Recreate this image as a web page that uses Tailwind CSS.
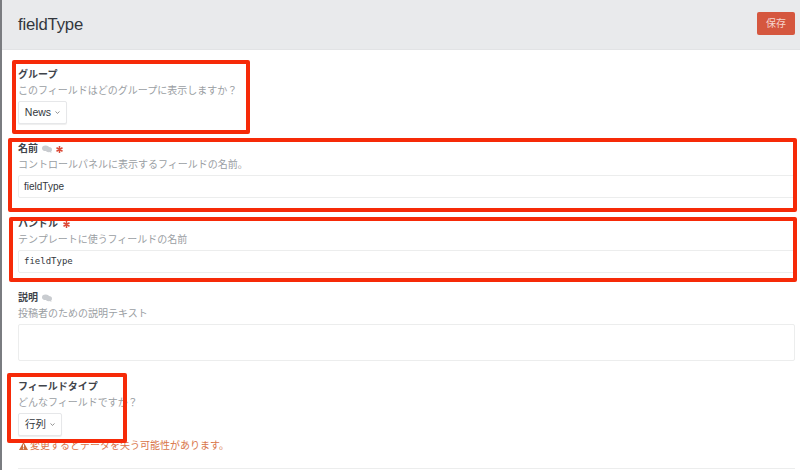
<!DOCTYPE html>
<html lang="ja">
<head>
  <meta charset="UTF-8" />
  <title>fieldType</title>
  <script src="https://cdn.jsdelivr.net/npm/@tailwindcss/browser@4"></script>
</head>
<body class="relative w-[800px] h-[470px] overflow-hidden bg-white font-['Liberation_Sans','Noto_Sans_CJK_JP',sans-serif] border-l-2 border-[#7a7c80]">

  <header class="h-[50px] pl-4 pr-[5px] flex items-center justify-between bg-[#e9eaec] border-b border-[#e2e3e5]">
    <h1 class="text-[16.7px] text-[#33373d] tracking-[-0.2px]">fieldType</h1>
    <button class="mb-[2px] w-[38px] h-[23px] rounded-[2px] bg-[#d5573f] text-[#f6d5cf] text-[10px]">保存</button>
  </header>

  <main class="pl-4 pr-[5px] pt-[17px]">
    <section class="mb-[17px]">
      <div class="h-4 flex items-center text-[10px] leading-4 font-bold text-[#3f444b]">グループ</div>
      <p class="h-[15px] text-[10px] leading-[15px] text-[#9a9ea3]">このフィールドはどのグループに表示しますか？</p>
      <button class="mt-[3px] h-[23px] w-[49px] flex items-center justify-center gap-1 rounded-[2px] bg-white border border-[#e6e7e9] shadow-[0_1px_1px_#eee] text-[10.5px] text-[#33373d]">News
        <svg class="w-[5px] h-[3px]" viewBox="0 0 5 3" fill="none" stroke="#777" stroke-width="0.8"><path d="M0.5 0.5 2.5 2.4 4.5 0.5" /></svg>
      </button>
    </section>

    <section class="mb-[18px]">
      <div class="h-4 flex items-center text-[10px] leading-4 font-bold text-[#3f444b]">名前
        <svg class="ml-1 w-[10px] h-[8px]" viewBox="0 0 10 8" fill="#c9ccd0"><ellipse cx="3.6" cy="3.2" rx="3.6" ry="2.8" /><ellipse cx="6.8" cy="4.6" rx="3.2" ry="2.6" /><path d="M7 6.5 9.5 8 8.8 5.5Z" /></svg>
        <svg class="ml-[4px] w-[7px] h-[7px]" viewBox="0 0 7 7" stroke="#dc4b38" stroke-width="1.5"><path d="M3.5 0V7M0.5 1.75 6.5 5.25M6.5 1.75 0.5 5.25" /></svg>
      </div>
      <p class="h-[15px] text-[10px] leading-[15px] text-[#9a9ea3]">コントロールパネルに表示するフィールドの名前。</p>
      <div class="mt-[3px] h-[23px] pl-[5px] flex items-center border border-[#eceded] rounded-[2px] text-[10px] text-[#33373d]">fieldType</div>
    </section>

    <section class="mb-[17px]">
      <div class="h-4 flex items-center text-[10px] leading-4 font-bold text-[#3f444b]">ハンドル
        <svg class="ml-[5px] w-[7px] h-[7px]" viewBox="0 0 7 7" stroke="#dc4b38" stroke-width="1.5"><path d="M3.5 0V7M0.5 1.75 6.5 5.25M6.5 1.75 0.5 5.25" /></svg>
      </div>
      <p class="h-[15px] text-[10px] leading-[15px] text-[#9a9ea3]">テンプレートに使うフィールドの名前</p>
      <div class="mt-[3px] h-[23px] pl-[5px] flex items-center border border-[#eceded] rounded-[2px] font-['DejaVu_Sans_Mono',monospace] text-[9px] text-[#33373d]">fieldType</div>
    </section>

    <section class="mb-[18px]">
      <div class="h-4 flex items-center text-[10px] leading-4 font-bold text-[#3f444b]">説明
        <svg class="ml-1 w-[10px] h-[8px]" viewBox="0 0 10 8" fill="#c9ccd0"><ellipse cx="3.6" cy="3.2" rx="3.6" ry="2.8" /><ellipse cx="6.8" cy="4.6" rx="3.2" ry="2.6" /><path d="M7 6.5 9.5 8 8.8 5.5Z" /></svg>
      </div>
      <p class="h-[15px] text-[10px] leading-[15px] text-[#9a9ea3]">投稿者のための説明テキスト</p>
      <div class="mt-[3px] h-[37px] border border-[#eceded] rounded-[2px]"></div>
    </section>

    <section>
      <div class="h-4 flex items-center text-[10px] leading-4 font-bold text-[#3f444b]">フィールドタイプ</div>
      <p class="h-[15px] text-[10px] leading-[15px] text-[#9a9ea3]">どんなフィールドですか？</p>
      <button class="mt-[3px] h-[23px] w-[44px] flex items-center justify-center gap-1 rounded-[2px] bg-white border border-[#e6e7e9] shadow-[0_1px_1px_#eee] text-[10.5px] text-[#33373d]">行列
        <svg class="w-[5px] h-[3px]" viewBox="0 0 5 3" fill="none" stroke="#777" stroke-width="0.8"><path d="M0.5 0.5 2.5 2.4 4.5 0.5" /></svg>
      </button>
      <p class="mt-[2px] h-[15px] flex items-center text-[10px] leading-[15px] text-[#d9764a]">
        <svg class="ml-px mr-[2px] w-[9px] h-[8px]" viewBox="0 0 9 8"><path fill="#c9703f" d="M4.5 0 9 8H0Z" /><path stroke="#fff" stroke-width="1" d="M4.5 2.5V5.5M4.5 6.2V7.2" /></svg>変更するとデータを失う可能性があります。
      </p>
      <div class="mt-[15px] border-t border-[#eceded]"></div>
    </section>
  </main>

  <!-- red annotation boxes drawn over the screenshot -->
  <div class="absolute left-[10px] top-[60px] w-[238px] h-[74px] border-4 border-[#f62a08] rounded-[2px]"></div>
  <div class="absolute left-[6px] top-[138px] w-[789px] h-[74px] border-4 border-[#f62a08] rounded-[2px]"></div>
  <div class="absolute left-[7px] top-[217px] w-[788px] h-[65px] border-4 border-[#f62a08] rounded-[2px]"></div>
  <div class="absolute left-[5px] top-[373px] w-[120px] h-[70px] border-4 border-[#f62a08] rounded-[2px]"></div>
</body>
</html>
